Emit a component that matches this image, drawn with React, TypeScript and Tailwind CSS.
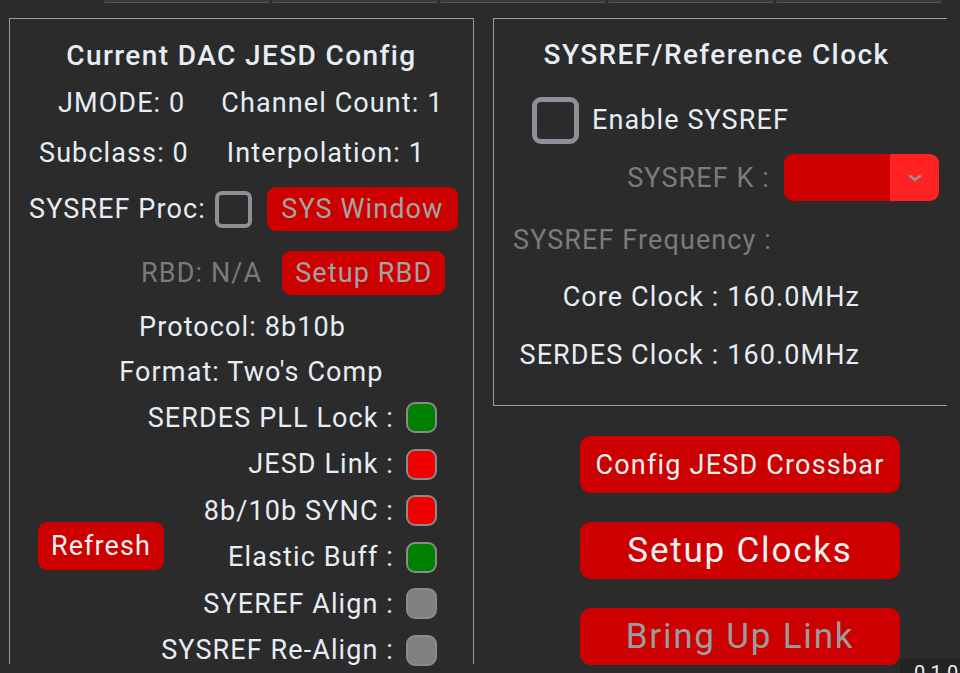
import React from "react";

const TXT = "text-[#e6edf5]";
const GRAY = "text-[#7b7b7b]";
const BODY = "text-[27px] leading-[30px] tracking-[1.1px] whitespace-nowrap";

function Indicator({ color }: { color: string }) {
  return (
    <div
      className="shrink-0 w-[31px] h-[31px] rounded-[9px] border-2 border-[#8a8a8a]"
      style={{ backgroundColor: color }}
    />
  );
}

function StatusRow({ label, color }: { label: string; color: string }) {
  return (
    <div className="flex items-center justify-end gap-[12px] h-[31px]">
      <span className={`${TXT} ${BODY}`}>{label}</span>
      <Indicator color={color} />
    </div>
  );
}

export default function App() {
  return (
    <div
      className="relative w-[960px] h-[673px] overflow-hidden bg-[#2b2b2b]"
      style={{ fontFamily: "Roboto, 'Noto Sans', sans-serif" }}
    >
      {/* top tab strip */}
      <div className="flex h-[4px] pl-[104px] gap-[2px]">
        {[0, 1, 2, 3, 4].map((i) => (
          <div key={i} className="w-[166px] h-[3px] bg-[#3a3a3a] border-b border-[#555] rounded-b-[2px]" />
        ))}
      </div>

      <div className="flex mt-[14px] pl-[9px] gap-[19px]">
        {/* left panel */}
        <div className="shrink-0 w-[465px] h-[646px] border-l border-t border-r border-[#9a9a9a] flex flex-col">
          <div className={`${TXT} text-[28px] font-medium leading-[30px] tracking-[1.4px] whitespace-nowrap text-center pt-[22px]`}>
            Current DAC JESD Config
          </div>
          <div className={`flex mt-[17px] pl-[48px] gap-[36px] ${TXT} ${BODY}`}>
            <span>JMODE: 0</span>
            <span>Channel Count: 1</span>
          </div>
          <div className={`flex mt-[20px] pl-[29px] gap-[38px] ${TXT} ${BODY}`}>
            <span>Subclass: 0</span>
            <span>Interpolation: 1</span>
          </div>
          <div className="flex items-center mt-[19px] pl-[19px] h-[44px]">
            <span className={`${TXT} ${BODY}`}>SYSREF Proc:</span>
            <div className="ml-[9px] w-[37px] h-[37px] rounded-[7px] border-[4px] border-[#8d9197]" />
            <button className={`ml-[15px] w-[191px] h-[44px] rounded-[9px] bg-[#cc0000] text-[#a3a3a3] ${BODY}`}>
              SYS Window
            </button>
          </div>
          <div className="flex items-center mt-[20px] pl-[131px] h-[44px]">
            <span className={`${GRAY} ${BODY}`}>RBD: N/A</span>
            <button className={`ml-[20px] w-[163px] h-[44px] rounded-[9px] bg-[#cc0000] text-[#a3a3a3] ${BODY}`}>
              Setup RBD
            </button>
          </div>
          <div className={`mt-[17px] text-center pl-[2px] ${TXT} ${BODY}`}>Protocol: 8b10b</div>
          <div className={`mt-[15px] text-center pl-[20px] ${TXT} ${BODY}`}>Format: Two's Comp</div>

          <div className="flex mt-[15px] pl-[28px] pr-[36px]">
            <div className="shrink-0 pt-[120px]">
              <button className={`w-[126px] h-[48px] rounded-[9px] bg-[#cc0000] text-[#f0f0f0] ${BODY}`}>
                Refresh
              </button>
            </div>
            <div className="flex-1 min-w-0 flex flex-col gap-[15.5px]">
              <StatusRow label="SERDES PLL Lock :" color="#008000" />
              <StatusRow label="JESD Link :" color="#f00000" />
              <StatusRow label="8b/10b SYNC :" color="#f00000" />
              <StatusRow label="Elastic Buff :" color="#008000" />
              <StatusRow label="SYEREF Align :" color="#808080" />
              <StatusRow label="SYSREF Re-Align :" color="#808080" />
            </div>
          </div>
        </div>

        {/* right column */}
        <div className="shrink-0 w-[454px] flex flex-col">
          <div className="h-[388px] border-l border-t border-b border-[#9a9a9a] flex flex-col">
            <div className={`${TXT} text-[28px] font-medium leading-[30px] tracking-[1.4px] whitespace-nowrap text-center pt-[21px] pr-[8px]`}>
              SYSREF/Reference Clock
            </div>
            <div className="flex items-center mt-[27px] pl-[38px] h-[46px]">
              <div className="w-[47px] h-[47px] rounded-[9px] border-[5px] border-[#8d9197]" />
              <span className={`ml-[13px] ${TXT} ${BODY}`}>Enable SYSREF</span>
            </div>
            <div className="flex items-center justify-end mt-[11px] pr-[8px] h-[47px]">
              <span className={`${GRAY} ${BODY}`}>SYSREF K :</span>
              <div className="ml-[14px] w-[155px] h-[47px] rounded-[9px] overflow-hidden flex">
                <div className="flex-1 bg-[#cc0000]" />
                <div className="w-[49px] bg-[#ff2222] flex items-center justify-center">
                  <svg width="14" height="10" viewBox="0 0 14 10">
                    <path d="M2 3 L7 7 L12 3" stroke="#8a9aa0" strokeWidth="2.5" fill="none" strokeLinecap="round" />
                  </svg>
                </div>
              </div>
            </div>
            <div className={`mt-[24px] pl-[19px] ${GRAY} ${BODY}`}>SYSREF Frequency :</div>
            <div className={`mt-[27px] pr-[87px] text-right ${TXT} ${BODY}`}>Core Clock : 160.0MHz</div>
            <div className={`mt-[28px] pr-[87px] text-right ${TXT} ${BODY}`}>SERDES Clock : 160.0MHz</div>
          </div>

          <div className="flex flex-col pl-[87px] mt-[30px] gap-[29px]">
            <button className="w-[320px] h-[57px] rounded-[11px] bg-[#cc0000] text-[#f0f0f0] text-[27px] leading-[30px] tracking-[1.2px] whitespace-nowrap">
              Config JESD Crossbar
            </button>
            <button className="w-[320px] h-[57px] rounded-[11px] bg-[#cc0000] text-[#f0f0f0] text-[35px] leading-[40px] tracking-[1.8px] whitespace-nowrap">
              Setup Clocks
            </button>
            <button className="w-[320px] h-[57px] rounded-[11px] bg-[#cc0000] text-[#9c9c9c] text-[35px] leading-[40px] tracking-[1.8px] whitespace-nowrap">
              Bring Up Link
            </button>
          </div>
        </div>
      </div>

      {/* version footer */}
      <div className="absolute left-[900px] top-[659px] w-[60px] h-[14px] bg-[#232323] overflow-hidden">
        <span className="block pl-[14px] pt-[4px] text-[20px] leading-[20px] text-[#e6edf5]">0.1.0</span>
      </div>
    </div>
  );
}
